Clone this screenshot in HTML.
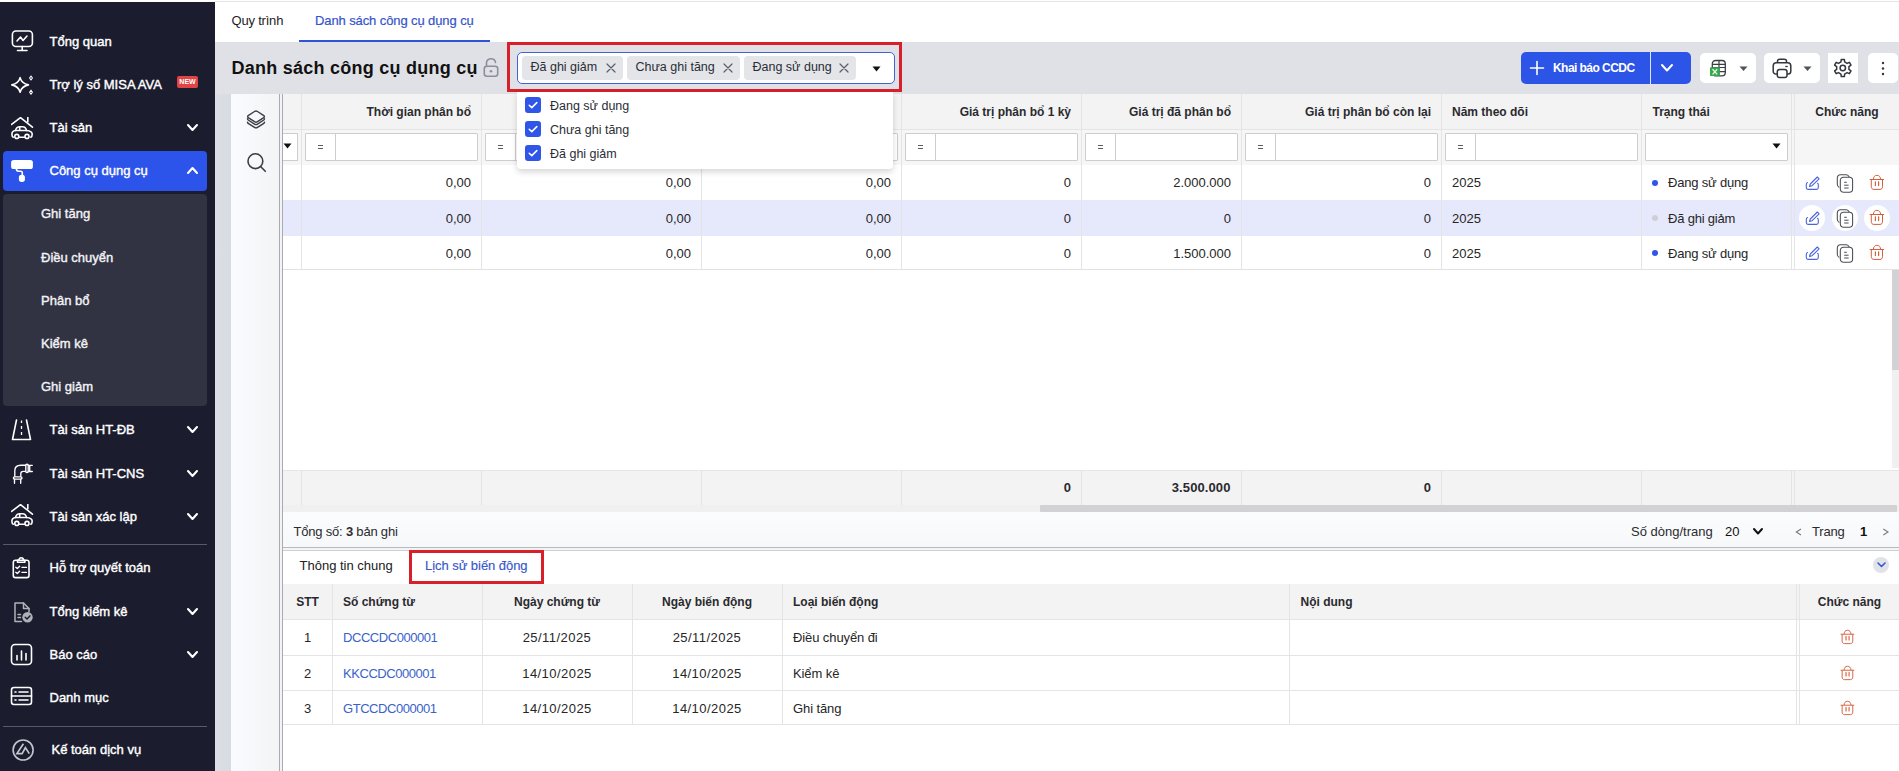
<!DOCTYPE html><html><head><meta charset="utf-8"><style>
html,body{margin:0;padding:0;}
body{width:1899px;height:771px;overflow:hidden;position:relative;background:#dfe1e6;font-family:"Liberation Sans",sans-serif;}
.t{position:absolute;white-space:nowrap;font-family:"Liberation Sans",sans-serif;}
.sb{-webkit-text-stroke:0.25px currentColor;}
</style></head><body>
<div style="position:absolute;left:0px;top:0px;width:1899px;height:2px;background:#ffffff"></div>
<div style="position:absolute;left:215px;top:1px;width:1684px;height:1px;background:#e4e4e6"></div>
<div style="position:absolute;left:0px;top:2px;width:215px;height:769px;background:#1b1c2e"></div>
<div style="position:absolute;left:3px;top:151px;width:204px;height:40px;background:#2c53ea;border-radius:4px"></div>
<div style="position:absolute;left:3px;top:194px;width:204px;height:212px;background:#313242;border-radius:4px"></div>
<div style="position:absolute;left:3px;top:544px;width:204px;height:1px;background:#585a68"></div>
<div style="position:absolute;left:3px;top:726px;width:204px;height:1px;background:#585a68"></div>
<div class="t" style="left:49.50px;top:35.00px;width:600px;font-size:13px;line-height:13px;font-weight:400;color:#ffffff;text-align:left;-webkit-text-stroke:0.4px #ffffff;">Tổng quan</div>
<div class="t" style="left:49.50px;top:78.00px;width:600px;font-size:13px;line-height:13px;font-weight:400;color:#ffffff;text-align:left;-webkit-text-stroke:0.4px #ffffff;">Trợ lý số MISA AVA</div>
<div class="t" style="left:49.50px;top:121.00px;width:600px;font-size:13px;line-height:13px;font-weight:400;color:#ffffff;text-align:left;-webkit-text-stroke:0.4px #ffffff;">Tài sản</div>
<div class="t" style="left:49.50px;top:164.00px;width:600px;font-size:13px;line-height:13px;font-weight:400;color:#ffffff;text-align:left;-webkit-text-stroke:0.4px #ffffff;">Công cụ dụng cụ</div>
<div class="t" style="left:41.00px;top:207.00px;width:600px;font-size:13px;line-height:13px;font-weight:400;color:#f2f2f5;text-align:left;-webkit-text-stroke:0.4px #f2f2f5;">Ghi tăng</div>
<div class="t" style="left:41.00px;top:250.50px;width:600px;font-size:13px;line-height:13px;font-weight:400;color:#f2f2f5;text-align:left;-webkit-text-stroke:0.4px #f2f2f5;">Điều chuyển</div>
<div class="t" style="left:41.00px;top:293.70px;width:600px;font-size:13px;line-height:13px;font-weight:400;color:#f2f2f5;text-align:left;-webkit-text-stroke:0.4px #f2f2f5;">Phân bổ</div>
<div class="t" style="left:41.00px;top:336.80px;width:600px;font-size:13px;line-height:13px;font-weight:400;color:#f2f2f5;text-align:left;-webkit-text-stroke:0.4px #f2f2f5;">Kiểm kê</div>
<div class="t" style="left:41.00px;top:379.80px;width:600px;font-size:13px;line-height:13px;font-weight:400;color:#f2f2f5;text-align:left;-webkit-text-stroke:0.4px #f2f2f5;">Ghi giảm</div>
<div class="t" style="left:49.50px;top:423.00px;width:600px;font-size:13px;line-height:13px;font-weight:400;color:#ffffff;text-align:left;-webkit-text-stroke:0.4px #ffffff;">Tài sản HT-ĐB</div>
<div class="t" style="left:49.50px;top:467.00px;width:600px;font-size:13px;line-height:13px;font-weight:400;color:#ffffff;text-align:left;-webkit-text-stroke:0.4px #ffffff;">Tài sản HT-CNS</div>
<div class="t" style="left:49.50px;top:510.00px;width:600px;font-size:13px;line-height:13px;font-weight:400;color:#ffffff;text-align:left;-webkit-text-stroke:0.4px #ffffff;">Tài sản xác lập</div>
<div class="t" style="left:49.50px;top:561.00px;width:600px;font-size:13px;line-height:13px;font-weight:400;color:#ffffff;text-align:left;-webkit-text-stroke:0.4px #ffffff;">Hỗ trợ quyết toán</div>
<div class="t" style="left:49.50px;top:605.00px;width:600px;font-size:13px;line-height:13px;font-weight:400;color:#ffffff;text-align:left;-webkit-text-stroke:0.4px #ffffff;">Tổng kiểm kê</div>
<div class="t" style="left:49.50px;top:648.00px;width:600px;font-size:13px;line-height:13px;font-weight:400;color:#ffffff;text-align:left;-webkit-text-stroke:0.4px #ffffff;">Báo cáo</div>
<div class="t" style="left:49.50px;top:691.00px;width:600px;font-size:13px;line-height:13px;font-weight:400;color:#ffffff;text-align:left;-webkit-text-stroke:0.4px #ffffff;">Danh mục</div>
<div class="t" style="left:51.50px;top:743.00px;width:600px;font-size:13px;line-height:13px;font-weight:400;color:#ffffff;text-align:left;-webkit-text-stroke:0.4px #ffffff;">Kế toán dịch vụ</div>
<div style="position:absolute;left:177px;top:76px;width:21px;height:12px;background:#e04444;border-radius:2px;color:#fff;font-size:7px;line-height:12px;font-weight:700;text-align:center;font-family:'Liberation Sans',sans-serif;">NEW</div>
<svg style="position:absolute;left:186.1px;top:122.9px;" width="13" height="9" viewBox="0 0 13 9" fill="none"><path d="M2 2 L6.5 7 L11 2" stroke="#ffffff" stroke-width="2.1" stroke-linecap="round" stroke-linejoin="round"/></svg>
<svg style="position:absolute;left:186.1px;top:424.9px;" width="13" height="9" viewBox="0 0 13 9" fill="none"><path d="M2 2 L6.5 7 L11 2" stroke="#ffffff" stroke-width="2.1" stroke-linecap="round" stroke-linejoin="round"/></svg>
<svg style="position:absolute;left:186.1px;top:468.9px;" width="13" height="9" viewBox="0 0 13 9" fill="none"><path d="M2 2 L6.5 7 L11 2" stroke="#ffffff" stroke-width="2.1" stroke-linecap="round" stroke-linejoin="round"/></svg>
<svg style="position:absolute;left:186.1px;top:511.9px;" width="13" height="9" viewBox="0 0 13 9" fill="none"><path d="M2 2 L6.5 7 L11 2" stroke="#ffffff" stroke-width="2.1" stroke-linecap="round" stroke-linejoin="round"/></svg>
<svg style="position:absolute;left:186.1px;top:606.9px;" width="13" height="9" viewBox="0 0 13 9" fill="none"><path d="M2 2 L6.5 7 L11 2" stroke="#ffffff" stroke-width="2.1" stroke-linecap="round" stroke-linejoin="round"/></svg>
<svg style="position:absolute;left:186.1px;top:649.9px;" width="13" height="9" viewBox="0 0 13 9" fill="none"><path d="M2 2 L6.5 7 L11 2" stroke="#ffffff" stroke-width="2.1" stroke-linecap="round" stroke-linejoin="round"/></svg>
<svg style="position:absolute;left:186.1px;top:165.7px;" width="13" height="9" viewBox="0 0 13 9" fill="none"><path d="M2 7 L6.5 2 L11 7" stroke="#ffffff" stroke-width="2.1" stroke-linecap="round" stroke-linejoin="round"/></svg>
<svg style="position:absolute;left:10px;top:29px;" width="25" height="24" viewBox="0 0 25 24" fill="none"><rect x="2.4" y="2" width="20" height="15.5" rx="3.5" stroke="#ffffff" stroke-width="1.6" stroke-linecap="round" stroke-linejoin="round"/><path d="M12.2 17.5 V21.5 M7.5 21.5 H17" stroke="#ffffff" stroke-width="1.6" stroke-linecap="round" stroke-linejoin="round"/><path d="M7 12 L10.5 8 L13 11.5 L17 7" stroke="#ffffff" stroke-width="1.6" stroke-linecap="round" stroke-linejoin="round"/></svg>
<svg style="position:absolute;left:10px;top:74px;" width="25" height="22" viewBox="0 0 25 22" fill="none"><path d="M10.1 3.6 Q11.6 9.4 18.4 10.9 Q11.6 12.4 10.1 18.2 Q8.6 12.4 1.8 10.9 Q8.6 9.4 10.1 3.6 Z" stroke="#ffffff" stroke-width="1.6" stroke-linecap="round" stroke-linejoin="round"/><path d="M21 2 L22.4 4 L21 6 L19.6 4 Z" stroke="#fff" stroke-width="1.1" stroke-linejoin="round"/><path d="M21 16.2 L22.4 18.2 L21 20.2 L19.6 18.2 Z" stroke="#fff" stroke-width="1.1" stroke-linejoin="round"/></svg>
<svg style="position:absolute;left:11px;top:117px;" width="23" height="23" viewBox="0 0 23 23" fill="none"><path d="M0.6 7.4 L9.5 0.6 L21.4 10.2" stroke="#ffffff" stroke-width="1.6" stroke-linecap="round" stroke-linejoin="round"/><path d="M16.8 0.6 V5" stroke="#ffffff" stroke-width="1.6" stroke-linecap="round" stroke-linejoin="round"/><path d="M2.3 20.2 C1.3 19.7 0.9 18.6 0.9 17.2 C0.9 15 2.2 13.8 4.4 13.5 C5.1 11.1 6.5 9.7 8.8 9.7 H11.6 C13.6 9.7 14.9 10.9 15.6 13.5 C19.2 13.8 21.2 15 21.2 17.2 C21.2 18.6 20.8 19.7 19.8 20.2 M8.2 20.3 H13.6" stroke="#ffffff" stroke-width="1.6" stroke-linecap="round" stroke-linejoin="round"/><path d="M4.4 13.5 H15.6 M8.7 9.9 V13.3" stroke="#ffffff" stroke-width="1.6" stroke-linecap="round" stroke-linejoin="round"/><circle cx="5.8" cy="19.4" r="2" fill="#1b1c2e" stroke="#ffffff" stroke-width="1.6" stroke-linecap="round" stroke-linejoin="round"/><circle cx="16" cy="19.4" r="2" fill="#1b1c2e" stroke="#ffffff" stroke-width="1.6" stroke-linecap="round" stroke-linejoin="round"/></svg>
<svg style="position:absolute;left:11px;top:504px;" width="23" height="23" viewBox="0 0 23 23" fill="none"><path d="M0.6 7.4 L9.5 0.6 L21.4 10.2" stroke="#ffffff" stroke-width="1.6" stroke-linecap="round" stroke-linejoin="round"/><path d="M16.8 0.6 V5" stroke="#ffffff" stroke-width="1.6" stroke-linecap="round" stroke-linejoin="round"/><path d="M2.3 20.2 C1.3 19.7 0.9 18.6 0.9 17.2 C0.9 15 2.2 13.8 4.4 13.5 C5.1 11.1 6.5 9.7 8.8 9.7 H11.6 C13.6 9.7 14.9 10.9 15.6 13.5 C19.2 13.8 21.2 15 21.2 17.2 C21.2 18.6 20.8 19.7 19.8 20.2 M8.2 20.3 H13.6" stroke="#ffffff" stroke-width="1.6" stroke-linecap="round" stroke-linejoin="round"/><path d="M4.4 13.5 H15.6 M8.7 9.9 V13.3" stroke="#ffffff" stroke-width="1.6" stroke-linecap="round" stroke-linejoin="round"/><circle cx="5.8" cy="19.4" r="2" fill="#1b1c2e" stroke="#ffffff" stroke-width="1.6" stroke-linecap="round" stroke-linejoin="round"/><circle cx="16" cy="19.4" r="2" fill="#1b1c2e" stroke="#ffffff" stroke-width="1.6" stroke-linecap="round" stroke-linejoin="round"/></svg>
<svg style="position:absolute;left:10px;top:159px;" width="24" height="24" viewBox="0 0 24 24" fill="none"><rect x="1.1" y="1.1" width="21.8" height="8.9" rx="2.6" fill="#fff"/><path d="M6.3 9.5 C6.3 11.5 7 12.3 8.8 12.3 H10.8 C11.8 12.3 12.3 12.9 12.3 13.8 V16.5" stroke="#fff" stroke-width="1.6" fill="none"/><rect x="8.9" y="15.7" width="6" height="7.2" rx="2.6" fill="#fff"/></svg>
<svg style="position:absolute;left:10px;top:418px;" width="24" height="24" viewBox="0 0 24 24" fill="none"><path d="M6.5 2 L2.5 21.5 H20.5 L16.5 2" stroke="#ffffff" stroke-width="1.6" stroke-linecap="round" stroke-linejoin="round"/><path d="M11.5 2.5 V5 M11.5 8 V11 M11.5 14 V17" stroke="#fff" stroke-width="1.3"/></svg>
<svg style="position:absolute;left:10px;top:461px;" width="24" height="24" viewBox="0 0 24 24" fill="none"><path d="M4.8 15.3 V9.8 C4.8 6.5 7 4.2 10.8 4.2 H15.6 M10.8 15.3 V12.8 C10.8 11.3 11.6 10.4 13.2 10.4 H15.6" stroke="#ffffff" stroke-width="1.35" stroke-linecap="round" stroke-linejoin="round" fill="none"/><rect x="15.8" y="3.2" width="2.4" height="8.4" rx="1.1" stroke="#ffffff" stroke-width="1.35" stroke-linecap="round" stroke-linejoin="round" fill="none"/><path d="M18.2 4.3 H22.3 M18.2 10.5 H22.3 M19.7 4.3 V10.5" stroke="#ffffff" stroke-width="1.35" stroke-linecap="round" stroke-linejoin="round" fill="none"/><rect x="3.4" y="15.8" width="8.6" height="2.3" rx="1.1" stroke="#ffffff" stroke-width="1.35" stroke-linecap="round" stroke-linejoin="round" fill="none"/><path d="M4.5 18.1 V22.2 M10.7 18.1 V22.2" stroke="#ffffff" stroke-width="1.35" stroke-linecap="round" stroke-linejoin="round" fill="none"/></svg>
<svg style="position:absolute;left:10px;top:556px;" width="24" height="26" viewBox="0 0 24 26" fill="none"><rect x="3.3" y="4.3" width="15.7" height="17.3" rx="2.2" stroke="#ffffff" stroke-width="1.6" stroke-linecap="round" stroke-linejoin="round"/><path d="M7.5 6.3 V4.3 H9 C9 2.8 9.8 1.8 11.2 1.8 C12.6 1.8 13.4 2.8 13.4 4.3 H14.9 V6.3 Z" stroke="#ffffff" stroke-width="1.6" stroke-linecap="round" stroke-linejoin="round"/><path d="M5.8 11.2 L7.3 12.6 L9.6 10.2 M12 11.4 H16.4 M5.8 16.2 L7.3 17.6 L9.6 15.2 M12 16.4 H16.4" stroke="#fff" stroke-width="1.4" stroke-linecap="round" stroke-linejoin="round"/></svg>
<svg style="position:absolute;left:10.5px;top:600.5px;" width="25" height="25" viewBox="0 0 25 25" fill="none"><path d="M12.5 2 H4 V20.5 H10.5 M12.5 2 L18 7.5 V11" stroke="#b0b1b8" stroke-width="1.5" stroke-linecap="round" stroke-linejoin="round"/><path d="M12.5 2 V7.5 H18" stroke="#b0b1b8" stroke-width="1.5" stroke-linecap="round" stroke-linejoin="round"/><path d="M7 13.5 H9.5 M7 16.5 H9.5" stroke="#b0b1b8" stroke-width="1.5" stroke-linecap="round" stroke-linejoin="round"/><circle cx="16.5" cy="16.3" r="5.2" fill="#b0b1b8"/><path d="M14.2 16.3 L16 18 L18.9 14.9" stroke="#1b1c2e" stroke-width="1.5" fill="none" stroke-linecap="round" stroke-linejoin="round"/></svg>
<svg style="position:absolute;left:10px;top:643px;" width="24" height="24" viewBox="0 0 24 24" fill="none"><rect x="1.5" y="1.5" width="20" height="20" rx="3.5" stroke="#ffffff" stroke-width="1.6" stroke-linecap="round" stroke-linejoin="round"/><path d="M7 12.5 V17 M11.5 8 V17 M16 10.5 V17" stroke="#ffffff" stroke-width="1.6" stroke-linecap="round" stroke-linejoin="round"/></svg>
<svg style="position:absolute;left:10px;top:686px;" width="24" height="22" viewBox="0 0 24 22" fill="none"><rect x="1.5" y="1.5" width="20" height="17" rx="2.5" stroke="#ffffff" stroke-width="1.6" stroke-linecap="round" stroke-linejoin="round"/><path d="M1.5 10 H21.5 M5 6 H6 M9 6 H18 M5 14 H6 M9 14 H18" stroke="#ffffff" stroke-width="1.6" stroke-linecap="round" stroke-linejoin="round"/></svg>
<svg style="position:absolute;left:11px;top:739px;" width="24" height="24" viewBox="0 0 24 24" fill="none"><circle cx="12.1" cy="11" r="10" stroke="#c4c5cd" stroke-width="1.6" fill="none"/><path d="M12.4 4.8 L5.9 14.6 H11.1 L14.4 8.6 L18.3 14.6" stroke="#c4c5cd" stroke-width="1.7" fill="none" stroke-linejoin="miter"/></svg>
<div style="position:absolute;left:215px;top:2px;width:1684px;height:40px;background:#ffffff"></div>
<div class="t" style="left:231.50px;top:14.00px;width:600px;font-size:13px;line-height:13px;font-weight:400;color:#1d1d1f;text-align:left;letter-spacing:-0.2px;">Quy trình</div>
<div class="t" style="left:315.00px;top:14.00px;width:600px;font-size:13px;line-height:13px;font-weight:400;color:#3654c9;text-align:left;letter-spacing:-0.1px;-webkit-text-stroke:0.2px #3654c9;">Danh sách công cụ dụng cụ</div>
<div style="position:absolute;left:299px;top:40px;width:191px;height:2px;background:#2f54d9"></div>
<div class="t" style="left:231.50px;top:59.26px;width:600px;font-size:18px;line-height:18px;font-weight:700;color:#111111;text-align:left;letter-spacing:0.25px;">Danh sách công cụ dụng cụ</div>
<svg style="position:absolute;left:482px;top:57px;" width="18" height="21" viewBox="0 0 18 21" fill="none"><path d="M4.5 9.5 V6 C4.5 3.5 6.5 1.8 9 1.8 C11.5 1.8 13.2 3.3 13.5 5.5" stroke="#8d909c" stroke-width="1.6" fill="none" stroke-linecap="round"/><rect x="2.3" y="9.3" width="13.4" height="10" rx="2.5" stroke="#8d909c" stroke-width="1.6" fill="none"/><circle cx="9" cy="14.2" r="1.3" fill="#8d909c"/></svg>
<div style="position:absolute;left:507px;top:42px;width:389px;height:44px;border:3px solid #d7202a;"></div>
<div style="position:absolute;left:517px;top:52px;width:376px;height:30px;background:#fff;border:1px solid #4263d6;border-radius:5px;"></div>
<div style="position:absolute;left:522px;top:56px;width:101px;height:24px;background:#e3e5e9;border-radius:4px;"></div>
<div class="t" style="left:530.50px;top:61.12px;width:600px;font-size:12.5px;line-height:12.5px;font-weight:400;color:#2a2d35;text-align:left;">Đã ghi giảm</div>
<svg style="position:absolute;left:606px;top:63px;" width="10" height="10" viewBox="0 0 10 10" fill="none"><path d="M1 1 L9 9 M9 1 L1 9" stroke="#5a5e66" stroke-width="1.2" stroke-linecap="round"/></svg>
<div style="position:absolute;left:627px;top:56px;width:113px;height:24px;background:#e3e5e9;border-radius:4px;"></div>
<div class="t" style="left:635.50px;top:61.12px;width:600px;font-size:12.5px;line-height:12.5px;font-weight:400;color:#2a2d35;text-align:left;">Chưa ghi tăng</div>
<svg style="position:absolute;left:723px;top:63px;" width="10" height="10" viewBox="0 0 10 10" fill="none"><path d="M1 1 L9 9 M9 1 L1 9" stroke="#5a5e66" stroke-width="1.2" stroke-linecap="round"/></svg>
<div style="position:absolute;left:744px;top:56px;width:112px;height:24px;background:#e3e5e9;border-radius:4px;"></div>
<div class="t" style="left:752.50px;top:61.12px;width:600px;font-size:12.5px;line-height:12.5px;font-weight:400;color:#2a2d35;text-align:left;">Đang sử dụng</div>
<svg style="position:absolute;left:839px;top:63px;" width="10" height="10" viewBox="0 0 10 10" fill="none"><path d="M1 1 L9 9 M9 1 L1 9" stroke="#5a5e66" stroke-width="1.2" stroke-linecap="round"/></svg>
<svg style="position:absolute;left:872px;top:66px;" width="9" height="6" viewBox="0 0 9 6" fill="none"><path d="M0.5 0.5 H8.5 L4.5 5.5 Z" fill="#111"/></svg>
<div style="position:absolute;left:1521px;top:52px;width:170px;height:32px;background:#2c54e6;border-radius:5px;"></div>
<div style="position:absolute;left:1650px;top:52px;width:1px;height:32px;background:#dfe6ff;"></div>
<svg style="position:absolute;left:1529px;top:60px;" width="16" height="16" viewBox="0 0 16 16" fill="none"><path d="M8 1.5 V14.5 M1.5 8 H14.5" stroke="#fff" stroke-width="1.6" stroke-linecap="round"/></svg>
<div class="t" style="left:1553.00px;top:61.64px;width:600px;font-size:12px;line-height:12px;font-weight:700;color:#ffffff;text-align:left;letter-spacing:-0.55px;">Khai báo CCDC</div>
<svg style="position:absolute;left:1659.5px;top:62.75px;" width="14" height="9.5" viewBox="0 0 14 9.5" fill="none"><path d="M2 2 L7.0 7.5 L12 2" stroke="#fff" stroke-width="2" stroke-linecap="round" stroke-linejoin="round"/></svg>
<div style="position:absolute;left:1700px;top:53px;width:56px;height:30px;background:#fff;border-radius:5px;"></div>
<div style="position:absolute;left:1764px;top:53px;width:56px;height:30px;background:#fff;border-radius:5px;"></div>
<div style="position:absolute;left:1828px;top:53px;width:30px;height:30px;background:#fff;"></div>
<div style="position:absolute;left:1868px;top:53px;width:30px;height:30px;background:#fff;border-radius:5px;"></div>
<svg style="position:absolute;left:1708px;top:58px;" width="20" height="20" viewBox="0 0 20 20" fill="none"><rect x="4.3" y="2.5" width="13" height="15.3" rx="3.3" stroke="#3a3d45" stroke-width="1.3" fill="none"/><path d="M11 2.5 V17.8 M4.3 6.4 H17.3 M4.3 9.5 H17.3 M4.3 13.7 H17.3" stroke="#3a3d45" stroke-width="1.2"/><rect x="2" y="9.3" width="9.8" height="8.7" rx="0.8" fill="#3aa74a"/><path d="M4.6 11.2 L9.2 16.4 M9.2 11.2 L4.6 16.4" stroke="#e9fbe9" stroke-width="1.3"/></svg>
<svg style="position:absolute;left:1739px;top:66px;" width="9" height="6" viewBox="0 0 9 6" fill="none"><path d="M0.5 0.5 H8.5 L4.5 5 Z" fill="#4d525d"/></svg>
<svg style="position:absolute;left:1771px;top:57px;" width="22" height="22" viewBox="0 0 22 22" fill="none"><path d="M6.5 5.8 V4.3 C6.5 2.9 7.3 2.2 8.7 2.2 H13.3 C14.7 2.2 15.5 2.9 15.5 4.3 V5.8" stroke="#33363d" stroke-width="1.5" fill="none"/><path d="M6 17 H5 C3.3 17 2.2 15.9 2.2 14.2 V9 C2.2 7 3.3 5.8 5.3 5.8 H16.7 C18.7 5.8 19.8 7 19.8 9 V14.2 C19.8 15.9 18.7 17 17 17 H16" stroke="#33363d" stroke-width="1.5" fill="none"/><rect x="6.3" y="12.5" width="9.7" height="8" rx="2.3" stroke="#33363d" stroke-width="1.5" fill="#fff"/><path d="M14.3 9.5 H16.7" stroke="#33363d" stroke-width="1.3"/></svg>
<svg style="position:absolute;left:1803px;top:66px;" width="9" height="6" viewBox="0 0 9 6" fill="none"><path d="M0.5 0.5 H8.5 L4.5 5 Z" fill="#4d525d"/></svg>
<svg style="position:absolute;left:1833px;top:58px;" width="20" height="20" viewBox="0 0 20 20" fill="none"><path d="M7.98 3.97 L8.23 1.44 L11.37 1.44 L11.62 3.97 L14.11 5.41 L16.42 4.36 L18.00 7.08 L15.93 8.56 L15.93 11.44 L18.00 12.92 L16.42 15.64 L14.11 14.59 L11.62 16.03 L11.37 18.56 L8.23 18.56 L7.98 16.03 L5.49 14.59 L3.18 15.64 L1.60 12.92 L3.67 11.44 L3.67 8.56 L1.60 7.08 L3.18 4.36 L5.49 5.41 Z" stroke="#33363d" stroke-width="1.5" fill="none" stroke-linejoin="round"/><circle cx="9.8" cy="10" r="2.7" stroke="#33363d" stroke-width="1.5" fill="none"/></svg>
<svg style="position:absolute;left:1880px;top:61px;" width="6" height="15" viewBox="0 0 6 15" fill="none"><circle cx="3" cy="2" r="1.2" fill="#33363d"/><circle cx="3" cy="7.5" r="1.2" fill="#33363d"/><circle cx="3" cy="13" r="1.2" fill="#33363d"/></svg>
<div style="position:absolute;left:215px;top:94px;width:16px;height:677px;background:linear-gradient(90deg,#dcdfe5,#d7dbe2);"></div>
<div style="position:absolute;left:231px;top:94px;width:48px;height:677px;background:linear-gradient(90deg,#f9fbfe,#f2f4f6);"></div>
<svg style="position:absolute;left:244px;top:107px;" width="24" height="26" viewBox="0 0 24 26" fill="none"><path d="M12 4 C12.6 4 13 4.2 13.5 4.5 L19.8 8.6 C20.6 9.1 20.6 10.1 19.8 10.6 L13.5 14.7 C13 15 12.6 15.2 12 15.2 C11.4 15.2 11 15 10.5 14.7 L4.2 10.6 C3.4 10.1 3.4 9.1 4.2 8.6 L10.5 4.5 C11 4.2 11.4 4 12 4 Z" stroke="#3a3d45" stroke-width="1.4" fill="none"/><path d="M3.6 11.3 C3.4 12 3.6 12.6 4.2 13 L10.5 17.1 C11.4 17.7 12.6 17.7 13.5 17.1 L19.8 13 C20.4 12.6 20.6 12 20.4 11.3 M3.6 14.6 C3.4 15.3 3.6 15.9 4.2 16.3 L10.5 20.4 C11.4 21 12.6 21 13.5 20.4 L19.8 16.3 C20.4 15.9 20.6 15.3 20.4 14.6" stroke="#3a3d45" stroke-width="1.4" fill="none"/></svg>
<svg style="position:absolute;left:244px;top:150px;" width="24" height="24" viewBox="0 0 24 24" fill="none"><circle cx="11.4" cy="11.2" r="7.4" stroke="#3a3d45" stroke-width="1.6" fill="none"/><path d="M16.8 16.8 L21.3 21.3" stroke="#3a3d45" stroke-width="1.6" stroke-linecap="round"/></svg>
<div style="position:absolute;left:279px;top:94px;width:1px;height:677px;background:#a9abb0"></div>
<div style="position:absolute;left:280px;top:94px;width:2px;height:677px;background:#f3f3f5"></div>
<div style="position:absolute;left:282px;top:94px;width:1px;height:677px;background:#a9abb0"></div>
<div style="position:absolute;left:283px;top:94px;width:1616px;height:453px;background:#ffffff"></div>
<div style="position:absolute;left:283px;top:94px;width:1616px;height:35px;background:#f3f3f3"></div>
<div style="position:absolute;left:283px;top:129px;width:1616px;height:1px;background:#e4e4e4"></div>
<div style="position:absolute;left:283px;top:130px;width:1616px;height:35px;background:#f6f6f6"></div>
<div style="position:absolute;left:283px;top:200px;width:1616px;height:36px;background:#e6e9fb"></div>
<div style="position:absolute;left:283px;top:269px;width:1616px;height:1px;background:#e2e2e2"></div>
<div style="position:absolute;left:301px;top:94px;width:1px;height:176px;background:#e4e4e4"></div>
<div style="position:absolute;left:481px;top:94px;width:1px;height:176px;background:#e4e4e4"></div>
<div style="position:absolute;left:701px;top:94px;width:1px;height:176px;background:#e4e4e4"></div>
<div style="position:absolute;left:901px;top:94px;width:1px;height:176px;background:#e4e4e4"></div>
<div style="position:absolute;left:1081px;top:94px;width:1px;height:176px;background:#e4e4e4"></div>
<div style="position:absolute;left:1241px;top:94px;width:1px;height:176px;background:#e4e4e4"></div>
<div style="position:absolute;left:1441px;top:94px;width:1px;height:176px;background:#e4e4e4"></div>
<div style="position:absolute;left:1641px;top:94px;width:1px;height:176px;background:#e4e4e4"></div>
<div style="position:absolute;left:1791px;top:94px;width:1px;height:176px;background:#e4e4e4"></div>
<div style="position:absolute;left:1794px;top:94px;width:1px;height:176px;background:#e4e4e4"></div>
<div class="t" style="left:-129.00px;top:105.84px;width:600px;font-size:12px;line-height:12px;font-weight:700;color:#2a2a2e;text-align:right;">Thời gian phân bổ</div>
<div class="t" style="left:471.00px;top:105.84px;width:600px;font-size:12px;line-height:12px;font-weight:700;color:#2a2a2e;text-align:right;">Giá trị phân bổ 1 kỳ</div>
<div class="t" style="left:631.00px;top:105.84px;width:600px;font-size:12px;line-height:12px;font-weight:700;color:#2a2a2e;text-align:right;">Giá trị đã phân bổ</div>
<div class="t" style="left:831.00px;top:105.84px;width:600px;font-size:12px;line-height:12px;font-weight:700;color:#2a2a2e;text-align:right;">Giá trị phân bổ còn lại</div>
<div class="t" style="left:1452.00px;top:105.84px;width:600px;font-size:12px;line-height:12px;font-weight:700;color:#2a2a2e;text-align:left;">Năm theo dõi</div>
<div class="t" style="left:1652.50px;top:105.84px;width:600px;font-size:12px;line-height:12px;font-weight:700;color:#2a2a2e;text-align:left;">Trạng thái</div>
<div class="t" style="left:1547.00px;top:105.84px;width:600px;font-size:12px;line-height:12px;font-weight:700;color:#2a2a2e;text-align:center;">Chức năng</div>
<div style="position:absolute;left:283px;top:133px;width:15px;height:28px;background:#fff;border:1px solid #cdcdcd;border-left:none;box-sizing:border-box;"></div>
<svg style="position:absolute;left:283px;top:143px;" width="9" height="6" viewBox="0 0 9 6" fill="none"><path d="M0.5 0.5 H8.5 L4.5 5.5 Z" fill="#111"/></svg>
<div style="position:absolute;left:305px;top:133px;width:173px;height:28px;background:#fff;border:1px solid #cdcdcd;border-radius:1px;box-sizing:border-box;"></div>
<div style="position:absolute;left:335px;top:134px;width:1px;height:26px;background:#cdcdcd"></div>
<div style="position:absolute;left:318px;top:145px;width:5px;height:1.2px;background:#5c5c5c"></div>
<div style="position:absolute;left:318px;top:148px;width:5px;height:1.2px;background:#5c5c5c"></div>
<div style="position:absolute;left:485px;top:133px;width:213px;height:28px;background:#fff;border:1px solid #cdcdcd;border-radius:1px;box-sizing:border-box;"></div>
<div style="position:absolute;left:515px;top:134px;width:1px;height:26px;background:#cdcdcd"></div>
<div style="position:absolute;left:498px;top:145px;width:5px;height:1.2px;background:#5c5c5c"></div>
<div style="position:absolute;left:498px;top:148px;width:5px;height:1.2px;background:#5c5c5c"></div>
<div style="position:absolute;left:705px;top:133px;width:193px;height:28px;background:#fff;border:1px solid #cdcdcd;border-radius:1px;box-sizing:border-box;"></div>
<div style="position:absolute;left:735px;top:134px;width:1px;height:26px;background:#cdcdcd"></div>
<div style="position:absolute;left:718px;top:145px;width:5px;height:1.2px;background:#5c5c5c"></div>
<div style="position:absolute;left:718px;top:148px;width:5px;height:1.2px;background:#5c5c5c"></div>
<div style="position:absolute;left:905px;top:133px;width:173px;height:28px;background:#fff;border:1px solid #cdcdcd;border-radius:1px;box-sizing:border-box;"></div>
<div style="position:absolute;left:935px;top:134px;width:1px;height:26px;background:#cdcdcd"></div>
<div style="position:absolute;left:918px;top:145px;width:5px;height:1.2px;background:#5c5c5c"></div>
<div style="position:absolute;left:918px;top:148px;width:5px;height:1.2px;background:#5c5c5c"></div>
<div style="position:absolute;left:1085px;top:133px;width:153px;height:28px;background:#fff;border:1px solid #cdcdcd;border-radius:1px;box-sizing:border-box;"></div>
<div style="position:absolute;left:1115px;top:134px;width:1px;height:26px;background:#cdcdcd"></div>
<div style="position:absolute;left:1098px;top:145px;width:5px;height:1.2px;background:#5c5c5c"></div>
<div style="position:absolute;left:1098px;top:148px;width:5px;height:1.2px;background:#5c5c5c"></div>
<div style="position:absolute;left:1245px;top:133px;width:193px;height:28px;background:#fff;border:1px solid #cdcdcd;border-radius:1px;box-sizing:border-box;"></div>
<div style="position:absolute;left:1275px;top:134px;width:1px;height:26px;background:#cdcdcd"></div>
<div style="position:absolute;left:1258px;top:145px;width:5px;height:1.2px;background:#5c5c5c"></div>
<div style="position:absolute;left:1258px;top:148px;width:5px;height:1.2px;background:#5c5c5c"></div>
<div style="position:absolute;left:1445px;top:133px;width:193px;height:28px;background:#fff;border:1px solid #cdcdcd;border-radius:1px;box-sizing:border-box;"></div>
<div style="position:absolute;left:1475px;top:134px;width:1px;height:26px;background:#cdcdcd"></div>
<div style="position:absolute;left:1458px;top:145px;width:5px;height:1.2px;background:#5c5c5c"></div>
<div style="position:absolute;left:1458px;top:148px;width:5px;height:1.2px;background:#5c5c5c"></div>
<div style="position:absolute;left:1645px;top:133px;width:143px;height:28px;background:#fff;border:1px solid #cdcdcd;border-radius:1px;box-sizing:border-box;"></div>
<svg style="position:absolute;left:1772px;top:143px;" width="9" height="6" viewBox="0 0 9 6" fill="none"><path d="M0.5 0.5 H8.5 L4.5 5.5 Z" fill="#111"/></svg>
<div style="position:absolute;left:1791px;top:130px;width:108px;height:35px;background:#f6f6f6"></div>
<div style="position:absolute;left:1791px;top:94px;width:1px;height:176px;background:#e4e4e4"></div>
<div style="position:absolute;left:1794px;top:94px;width:1px;height:176px;background:#e4e4e4"></div>
<div class="t" style="left:-129.00px;top:176.30px;width:600px;font-size:13px;line-height:13px;font-weight:400;color:#262626;text-align:right;">0,00</div>
<div class="t" style="left:91.00px;top:176.30px;width:600px;font-size:13px;line-height:13px;font-weight:400;color:#262626;text-align:right;">0,00</div>
<div class="t" style="left:291.00px;top:176.30px;width:600px;font-size:13px;line-height:13px;font-weight:400;color:#262626;text-align:right;">0,00</div>
<div class="t" style="left:471.00px;top:176.30px;width:600px;font-size:13px;line-height:13px;font-weight:400;color:#262626;text-align:right;">0</div>
<div class="t" style="left:631.00px;top:176.30px;width:600px;font-size:13px;line-height:13px;font-weight:400;color:#262626;text-align:right;">2.000.000</div>
<div class="t" style="left:831.00px;top:176.30px;width:600px;font-size:13px;line-height:13px;font-weight:400;color:#262626;text-align:right;">0</div>
<div class="t" style="left:1452.00px;top:176.30px;width:600px;font-size:13px;line-height:13px;font-weight:400;color:#262626;text-align:left;">2025</div>
<div style="position:absolute;left:1652px;top:179.8px;width:6px;height:6px;border-radius:3px;background:#2f56e8"></div>
<div class="t" style="left:1668.00px;top:176.30px;width:600px;font-size:13px;line-height:13px;font-weight:400;color:#262626;text-align:left;letter-spacing:-0.2px;">Đang sử dụng</div>
<svg style="position:absolute;left:1804px;top:173.8px;" width="18" height="18" viewBox="0 0 18 18" fill="none"><path d="M3.5 8.5 C2.8 8.8 2.3 9.5 2.3 10.5 V13.5 C2.3 14.6 3 15.4 4 15.4 H12.5 C13.6 15.4 14.3 14.6 14.3 13.5 V10.5 C14.3 9.8 14 9.4 13.5 9.2" stroke="#4a66d8" stroke-width="1.1" fill="none" stroke-linecap="round"/><path d="M5.5 12.4 L6.3 10 L13.3 3 L15.1 4.8 L8.1 11.7 Z" stroke="#4a66d8" stroke-width="1.1" fill="none" stroke-linejoin="round"/></svg>
<svg style="position:absolute;left:1836px;top:173.8px;" width="18" height="20" viewBox="0 0 18 20" fill="none"><path d="M3.3 13.5 C2 12.8 1.3 11.8 1.3 10.2 V4 C1.3 1.9 2.5 0.7 4.5 0.7 H10.5 C11.6 0.7 12.5 1.5 13.3 3" stroke="#4a4c52" stroke-width="1.05" fill="none"/><rect x="4.3" y="3.2" width="12.3" height="15.1" rx="3.2" fill="none" stroke="#4a4c52" stroke-width="1.05"/><path d="M8.2 8.3 H10.8 M8.2 11.2 H12.6 M8.2 14 H12.6" stroke="#4a4c52" stroke-width="1"/></svg>
<svg style="position:absolute;left:1868px;top:173.8px;" width="18" height="18" viewBox="0 0 18 18" fill="none"><path d="M2.1 5.5 H15.6" stroke="#d35f3d" stroke-width="1" stroke-linecap="round"/><path d="M5.4 5.5 C5.4 3 6.7 1.3 8.9 1.3 C11.1 1.3 12.6 3 12.6 5.5" stroke="#d35f3d" stroke-width="1" fill="none"/><path d="M3.3 5.5 V12.8 C3.3 14.3 4.3 15.4 5.8 15.4 H12 C13.5 15.4 14.5 14.3 14.5 12.8 V5.5" stroke="#d35f3d" stroke-width="1" fill="none"/><path d="M7.4 7.8 V11.6 M10.6 7.8 V11.6" stroke="#d9603c" stroke-width="1.2" stroke-linecap="round"/></svg>
<div class="t" style="left:-129.00px;top:211.50px;width:600px;font-size:13px;line-height:13px;font-weight:400;color:#262626;text-align:right;">0,00</div>
<div class="t" style="left:91.00px;top:211.50px;width:600px;font-size:13px;line-height:13px;font-weight:400;color:#262626;text-align:right;">0,00</div>
<div class="t" style="left:291.00px;top:211.50px;width:600px;font-size:13px;line-height:13px;font-weight:400;color:#262626;text-align:right;">0,00</div>
<div class="t" style="left:471.00px;top:211.50px;width:600px;font-size:13px;line-height:13px;font-weight:400;color:#262626;text-align:right;">0</div>
<div class="t" style="left:631.00px;top:211.50px;width:600px;font-size:13px;line-height:13px;font-weight:400;color:#262626;text-align:right;">0</div>
<div class="t" style="left:831.00px;top:211.50px;width:600px;font-size:13px;line-height:13px;font-weight:400;color:#262626;text-align:right;">0</div>
<div class="t" style="left:1452.00px;top:211.50px;width:600px;font-size:13px;line-height:13px;font-weight:400;color:#262626;text-align:left;">2025</div>
<div style="position:absolute;left:1652px;top:215.0px;width:6px;height:6px;border-radius:3px;background:#cfcfd4"></div>
<div class="t" style="left:1668.00px;top:211.50px;width:600px;font-size:13px;line-height:13px;font-weight:400;color:#262626;text-align:left;letter-spacing:-0.2px;">Đã ghi giảm</div>
<div style="position:absolute;left:1799px;top:205.0px;width:26px;height:26px;border-radius:13px;background:#ffffff"></div>
<div style="position:absolute;left:1831.5px;top:205.0px;width:26px;height:26px;border-radius:13px;background:#ffffff"></div>
<div style="position:absolute;left:1863.5px;top:205.0px;width:26px;height:26px;border-radius:13px;background:#ffffff"></div>
<svg style="position:absolute;left:1804px;top:209.0px;" width="18" height="18" viewBox="0 0 18 18" fill="none"><path d="M3.5 8.5 C2.8 8.8 2.3 9.5 2.3 10.5 V13.5 C2.3 14.6 3 15.4 4 15.4 H12.5 C13.6 15.4 14.3 14.6 14.3 13.5 V10.5 C14.3 9.8 14 9.4 13.5 9.2" stroke="#4a66d8" stroke-width="1.1" fill="none" stroke-linecap="round"/><path d="M5.5 12.4 L6.3 10 L13.3 3 L15.1 4.8 L8.1 11.7 Z" stroke="#4a66d8" stroke-width="1.1" fill="none" stroke-linejoin="round"/></svg>
<svg style="position:absolute;left:1836px;top:209.0px;" width="18" height="20" viewBox="0 0 18 20" fill="none"><path d="M3.3 13.5 C2 12.8 1.3 11.8 1.3 10.2 V4 C1.3 1.9 2.5 0.7 4.5 0.7 H10.5 C11.6 0.7 12.5 1.5 13.3 3" stroke="#4a4c52" stroke-width="1.05" fill="none"/><rect x="4.3" y="3.2" width="12.3" height="15.1" rx="3.2" fill="none" stroke="#4a4c52" stroke-width="1.05"/><path d="M8.2 8.3 H10.8 M8.2 11.2 H12.6 M8.2 14 H12.6" stroke="#4a4c52" stroke-width="1"/></svg>
<svg style="position:absolute;left:1868px;top:209.0px;" width="18" height="18" viewBox="0 0 18 18" fill="none"><path d="M2.1 5.5 H15.6" stroke="#d35f3d" stroke-width="1" stroke-linecap="round"/><path d="M5.4 5.5 C5.4 3 6.7 1.3 8.9 1.3 C11.1 1.3 12.6 3 12.6 5.5" stroke="#d35f3d" stroke-width="1" fill="none"/><path d="M3.3 5.5 V12.8 C3.3 14.3 4.3 15.4 5.8 15.4 H12 C13.5 15.4 14.5 14.3 14.5 12.8 V5.5" stroke="#d35f3d" stroke-width="1" fill="none"/><path d="M7.4 7.8 V11.6 M10.6 7.8 V11.6" stroke="#d9603c" stroke-width="1.2" stroke-linecap="round"/></svg>
<div class="t" style="left:-129.00px;top:246.70px;width:600px;font-size:13px;line-height:13px;font-weight:400;color:#262626;text-align:right;">0,00</div>
<div class="t" style="left:91.00px;top:246.70px;width:600px;font-size:13px;line-height:13px;font-weight:400;color:#262626;text-align:right;">0,00</div>
<div class="t" style="left:291.00px;top:246.70px;width:600px;font-size:13px;line-height:13px;font-weight:400;color:#262626;text-align:right;">0,00</div>
<div class="t" style="left:471.00px;top:246.70px;width:600px;font-size:13px;line-height:13px;font-weight:400;color:#262626;text-align:right;">0</div>
<div class="t" style="left:631.00px;top:246.70px;width:600px;font-size:13px;line-height:13px;font-weight:400;color:#262626;text-align:right;">1.500.000</div>
<div class="t" style="left:831.00px;top:246.70px;width:600px;font-size:13px;line-height:13px;font-weight:400;color:#262626;text-align:right;">0</div>
<div class="t" style="left:1452.00px;top:246.70px;width:600px;font-size:13px;line-height:13px;font-weight:400;color:#262626;text-align:left;">2025</div>
<div style="position:absolute;left:1652px;top:250.2px;width:6px;height:6px;border-radius:3px;background:#2f56e8"></div>
<div class="t" style="left:1668.00px;top:246.70px;width:600px;font-size:13px;line-height:13px;font-weight:400;color:#262626;text-align:left;letter-spacing:-0.2px;">Đang sử dụng</div>
<svg style="position:absolute;left:1804px;top:244.2px;" width="18" height="18" viewBox="0 0 18 18" fill="none"><path d="M3.5 8.5 C2.8 8.8 2.3 9.5 2.3 10.5 V13.5 C2.3 14.6 3 15.4 4 15.4 H12.5 C13.6 15.4 14.3 14.6 14.3 13.5 V10.5 C14.3 9.8 14 9.4 13.5 9.2" stroke="#4a66d8" stroke-width="1.1" fill="none" stroke-linecap="round"/><path d="M5.5 12.4 L6.3 10 L13.3 3 L15.1 4.8 L8.1 11.7 Z" stroke="#4a66d8" stroke-width="1.1" fill="none" stroke-linejoin="round"/></svg>
<svg style="position:absolute;left:1836px;top:244.2px;" width="18" height="20" viewBox="0 0 18 20" fill="none"><path d="M3.3 13.5 C2 12.8 1.3 11.8 1.3 10.2 V4 C1.3 1.9 2.5 0.7 4.5 0.7 H10.5 C11.6 0.7 12.5 1.5 13.3 3" stroke="#4a4c52" stroke-width="1.05" fill="none"/><rect x="4.3" y="3.2" width="12.3" height="15.1" rx="3.2" fill="none" stroke="#4a4c52" stroke-width="1.05"/><path d="M8.2 8.3 H10.8 M8.2 11.2 H12.6 M8.2 14 H12.6" stroke="#4a4c52" stroke-width="1"/></svg>
<svg style="position:absolute;left:1868px;top:244.2px;" width="18" height="18" viewBox="0 0 18 18" fill="none"><path d="M2.1 5.5 H15.6" stroke="#d35f3d" stroke-width="1" stroke-linecap="round"/><path d="M5.4 5.5 C5.4 3 6.7 1.3 8.9 1.3 C11.1 1.3 12.6 3 12.6 5.5" stroke="#d35f3d" stroke-width="1" fill="none"/><path d="M3.3 5.5 V12.8 C3.3 14.3 4.3 15.4 5.8 15.4 H12 C13.5 15.4 14.5 14.3 14.5 12.8 V5.5" stroke="#d35f3d" stroke-width="1" fill="none"/><path d="M7.4 7.8 V11.6 M10.6 7.8 V11.6" stroke="#d9603c" stroke-width="1.2" stroke-linecap="round"/></svg>
<div style="position:absolute;left:517px;top:92px;width:376px;height:77px;background:#fff;border-radius:0 0 4px 4px;box-shadow:0 3px 6px rgba(0,0,0,0.16);"></div>
<div style="position:absolute;left:525px;top:97px;width:16px;height:16px;background:#2f56e8;border-radius:3px;"></div>
<svg style="position:absolute;left:525px;top:97px;" width="16" height="16" viewBox="0 0 16 16" fill="none"><path d="M4.2 8.2 L6.8 10.6 L11.8 5.6" stroke="#fff" stroke-width="1.5" fill="none" stroke-linecap="round" stroke-linejoin="round"/></svg>
<div class="t" style="left:550.00px;top:99.62px;width:600px;font-size:12.5px;line-height:12.5px;font-weight:400;color:#2a2d35;text-align:left;">Đang sử dụng</div>
<div style="position:absolute;left:525px;top:121px;width:16px;height:16px;background:#2f56e8;border-radius:3px;"></div>
<svg style="position:absolute;left:525px;top:121px;" width="16" height="16" viewBox="0 0 16 16" fill="none"><path d="M4.2 8.2 L6.8 10.6 L11.8 5.6" stroke="#fff" stroke-width="1.5" fill="none" stroke-linecap="round" stroke-linejoin="round"/></svg>
<div class="t" style="left:550.00px;top:123.62px;width:600px;font-size:12.5px;line-height:12.5px;font-weight:400;color:#2a2d35;text-align:left;">Chưa ghi tăng</div>
<div style="position:absolute;left:525px;top:145px;width:16px;height:16px;background:#2f56e8;border-radius:3px;"></div>
<svg style="position:absolute;left:525px;top:145px;" width="16" height="16" viewBox="0 0 16 16" fill="none"><path d="M4.2 8.2 L6.8 10.6 L11.8 5.6" stroke="#fff" stroke-width="1.5" fill="none" stroke-linecap="round" stroke-linejoin="round"/></svg>
<div class="t" style="left:550.00px;top:147.62px;width:600px;font-size:12.5px;line-height:12.5px;font-weight:400;color:#2a2d35;text-align:left;">Đã ghi giảm</div>
<div style="position:absolute;left:1892px;top:270px;width:7px;height:198px;background:#f0f0f1"></div>
<div style="position:absolute;left:1892px;top:270px;width:7px;height:100px;background:#d2d2d4"></div>
<div style="position:absolute;left:283px;top:470px;width:1616px;height:36px;background:#f3f3f4"></div>
<div style="position:absolute;left:283px;top:470px;width:1616px;height:1px;background:#e6e6e6"></div>
<div style="position:absolute;left:301px;top:470px;width:1px;height:36px;background:#e4e4e4"></div>
<div style="position:absolute;left:481px;top:470px;width:1px;height:36px;background:#e4e4e4"></div>
<div style="position:absolute;left:701px;top:470px;width:1px;height:36px;background:#e4e4e4"></div>
<div style="position:absolute;left:901px;top:470px;width:1px;height:36px;background:#e4e4e4"></div>
<div style="position:absolute;left:1081px;top:470px;width:1px;height:36px;background:#e4e4e4"></div>
<div style="position:absolute;left:1241px;top:470px;width:1px;height:36px;background:#e4e4e4"></div>
<div style="position:absolute;left:1441px;top:470px;width:1px;height:36px;background:#e4e4e4"></div>
<div style="position:absolute;left:1641px;top:470px;width:1px;height:36px;background:#e4e4e4"></div>
<div style="position:absolute;left:1791px;top:470px;width:1px;height:36px;background:#e4e4e4"></div>
<div style="position:absolute;left:1794px;top:470px;width:1px;height:36px;background:#e4e4e4"></div>
<div class="t" style="left:471.00px;top:481.00px;width:600px;font-size:13px;line-height:13px;font-weight:700;color:#2a2a2e;text-align:right;">0</div>
<div class="t" style="left:630.50px;top:481.00px;width:600px;font-size:13px;line-height:13px;font-weight:700;color:#2a2a2e;text-align:right;letter-spacing:0.1px;">3.500.000</div>
<div class="t" style="left:831.00px;top:481.00px;width:600px;font-size:13px;line-height:13px;font-weight:700;color:#2a2a2e;text-align:right;">0</div>
<div style="position:absolute;left:283px;top:505px;width:1616px;height:7px;background:#f0f0f1"></div>
<div style="position:absolute;left:1040px;top:505px;width:857px;height:7px;background:#d2d2d4;border-radius:1px"></div>
<div style="position:absolute;left:283px;top:512px;width:1616px;height:35px;background:linear-gradient(180deg,#fbfcfd,#f7f8fa);"></div>
<div class="t" style="left:293.50px;top:525.00px;width:600px;font-size:13px;line-height:13px;font-weight:400;color:#2b2b2e;text-align:left;letter-spacing:-0.2px;">Tổng số: <b>3</b> bản ghi</div>
<div class="t" style="left:1631.00px;top:525.00px;width:600px;font-size:13px;line-height:13px;font-weight:400;color:#2b2b2e;text-align:left;">Số dòng/trang</div>
<div class="t" style="left:1725.00px;top:525.00px;width:600px;font-size:13px;line-height:13px;font-weight:400;color:#111;text-align:left;">20</div>
<svg style="position:absolute;left:1751.5px;top:527.25px;" width="12" height="8.5" viewBox="0 0 12 8.5" fill="none"><path d="M2 2 L6.0 6.5 L10 2" stroke="#111" stroke-width="2" stroke-linecap="round" stroke-linejoin="round"/></svg>
<svg style="position:absolute;left:1794.5px;top:528px;" width="8" height="8" viewBox="0 0 8 8" fill="none"><path d="M6 1 L1.3 4 L6 7" stroke="#7a7a7a" stroke-width="1.1" fill="none"/></svg>
<div class="t" style="left:1812.00px;top:525.00px;width:600px;font-size:13px;line-height:13px;font-weight:400;color:#2b2b2e;text-align:left;letter-spacing:-0.2px;">Trang</div>
<div class="t" style="left:1860.00px;top:525.00px;width:600px;font-size:13px;line-height:13px;font-weight:700;color:#111;text-align:left;">1</div>
<svg style="position:absolute;left:1881.5px;top:528px;" width="8" height="8" viewBox="0 0 8 8" fill="none"><path d="M1.3 1 L6 4 L1.3 7" stroke="#7a7a7a" stroke-width="1.1" fill="none"/></svg>
<div style="position:absolute;left:283px;top:547px;width:1616px;height:1px;background:#b8b9bd"></div>
<div style="position:absolute;left:283px;top:548px;width:1616px;height:2px;background:#f4f4f6"></div>
<div style="position:absolute;left:283px;top:550px;width:1616px;height:1px;background:#cfd0d3"></div>
<div style="position:absolute;left:283px;top:551px;width:1616px;height:220px;background:#ffffff"></div>
<div class="t" style="left:299.50px;top:558.70px;width:600px;font-size:13px;line-height:13px;font-weight:400;color:#212121;text-align:left;">Thông tin chung</div>
<div class="t" style="left:425.00px;top:558.60px;width:600px;font-size:13px;line-height:13px;font-weight:400;color:#3857cc;text-align:left;letter-spacing:-0.05px;-webkit-text-stroke:0.15px #3857cc;">Lịch sử biến động</div>
<div style="position:absolute;left:409px;top:550px;width:129px;height:28px;border:3px solid #d7202a;"></div>
<div style="position:absolute;left:1873px;top:557px;width:16px;height:16px;border-radius:8px;background:#e2e3e8"></div>
<svg style="position:absolute;left:1875.5px;top:561.25px;" width="11" height="7.5" viewBox="0 0 11 7.5" fill="none"><path d="M2 2 L5.5 5.5 L9 2" stroke="#3457d5" stroke-width="1.6" stroke-linecap="round" stroke-linejoin="round"/></svg>
<div style="position:absolute;left:283px;top:584px;width:1616px;height:35px;background:#f3f3f3"></div>
<div style="position:absolute;left:283px;top:619px;width:1616px;height:1px;background:#e4e4e4"></div>
<div style="position:absolute;left:283px;top:655px;width:1616px;height:1px;background:#e4e4e4"></div>
<div style="position:absolute;left:283px;top:690px;width:1616px;height:1px;background:#e4e4e4"></div>
<div style="position:absolute;left:283px;top:724px;width:1616px;height:1px;background:#e4e4e4"></div>
<div style="position:absolute;left:332px;top:584px;width:1px;height:141px;background:#e4e4e4"></div>
<div style="position:absolute;left:482px;top:584px;width:1px;height:141px;background:#e4e4e4"></div>
<div style="position:absolute;left:632px;top:584px;width:1px;height:141px;background:#e4e4e4"></div>
<div style="position:absolute;left:782px;top:584px;width:1px;height:141px;background:#e4e4e4"></div>
<div style="position:absolute;left:1289px;top:584px;width:1px;height:141px;background:#e4e4e4"></div>
<div style="position:absolute;left:1796px;top:584px;width:1px;height:141px;background:#e4e4e4"></div>
<div style="position:absolute;left:1799px;top:584px;width:1px;height:141px;background:#e4e4e4"></div>
<div class="t" style="left:277.50px;top:595.84px;width:60px;font-size:12px;line-height:12px;font-weight:700;color:#2a2a2e;text-align:center;">STT</div>
<div class="t" style="left:343.00px;top:595.84px;width:600px;font-size:12px;line-height:12px;font-weight:700;color:#2a2a2e;text-align:left;">Số chứng từ</div>
<div class="t" style="left:257.00px;top:595.84px;width:600px;font-size:12px;line-height:12px;font-weight:700;color:#2a2a2e;text-align:center;">Ngày chứng từ</div>
<div class="t" style="left:407.00px;top:595.84px;width:600px;font-size:12px;line-height:12px;font-weight:700;color:#2a2a2e;text-align:center;">Ngày biến động</div>
<div class="t" style="left:793.00px;top:595.84px;width:600px;font-size:12px;line-height:12px;font-weight:700;color:#2a2a2e;text-align:left;">Loại biến động</div>
<div class="t" style="left:1300.50px;top:595.84px;width:600px;font-size:12px;line-height:12px;font-weight:700;color:#2a2a2e;text-align:left;">Nội dung</div>
<div class="t" style="left:1549.50px;top:595.84px;width:600px;font-size:12px;line-height:12px;font-weight:700;color:#2a2a2e;text-align:center;">Chức năng</div>
<div class="t" style="left:277.50px;top:631.00px;width:60px;font-size:13px;line-height:13px;font-weight:400;color:#262626;text-align:center;">1</div>
<div class="t" style="left:343.00px;top:631.00px;width:600px;font-size:13px;line-height:13px;font-weight:400;color:#3a63c8;text-align:left;letter-spacing:-0.45px;">DCCCDC000001</div>
<div class="t" style="left:257.00px;top:631.00px;width:600px;font-size:13px;line-height:13px;font-weight:400;color:#262626;text-align:center;letter-spacing:0.45px;">25/11/2025</div>
<div class="t" style="left:407.00px;top:631.00px;width:600px;font-size:13px;line-height:13px;font-weight:400;color:#262626;text-align:center;letter-spacing:0.45px;">25/11/2025</div>
<div class="t" style="left:793.00px;top:631.00px;width:600px;font-size:13px;line-height:13px;font-weight:400;color:#262626;text-align:left;letter-spacing:-0.1px;">Điều chuyển đi</div>
<svg style="position:absolute;left:1838.5px;top:629px;transform:scale(0.95);transform-origin:0 0;" width="18" height="18" viewBox="0 0 18 18" fill="none"><path d="M2.1 5.5 H15.6" stroke="#d35f3d" stroke-width="1" stroke-linecap="round"/><path d="M5.4 5.5 C5.4 3 6.7 1.3 8.9 1.3 C11.1 1.3 12.6 3 12.6 5.5" stroke="#d35f3d" stroke-width="1" fill="none"/><path d="M3.3 5.5 V12.8 C3.3 14.3 4.3 15.4 5.8 15.4 H12 C13.5 15.4 14.5 14.3 14.5 12.8 V5.5" stroke="#d35f3d" stroke-width="1" fill="none"/><path d="M7.4 7.8 V11.6 M10.6 7.8 V11.6" stroke="#d9603c" stroke-width="1.2" stroke-linecap="round"/></svg>
<div class="t" style="left:277.50px;top:666.50px;width:60px;font-size:13px;line-height:13px;font-weight:400;color:#262626;text-align:center;">2</div>
<div class="t" style="left:343.00px;top:666.50px;width:600px;font-size:13px;line-height:13px;font-weight:400;color:#3a63c8;text-align:left;letter-spacing:-0.45px;">KKCCDC000001</div>
<div class="t" style="left:257.00px;top:666.50px;width:600px;font-size:13px;line-height:13px;font-weight:400;color:#262626;text-align:center;letter-spacing:0.45px;">14/10/2025</div>
<div class="t" style="left:407.00px;top:666.50px;width:600px;font-size:13px;line-height:13px;font-weight:400;color:#262626;text-align:center;letter-spacing:0.45px;">14/10/2025</div>
<div class="t" style="left:793.00px;top:666.50px;width:600px;font-size:13px;line-height:13px;font-weight:400;color:#262626;text-align:left;letter-spacing:-0.1px;">Kiểm kê</div>
<svg style="position:absolute;left:1838.5px;top:664.5px;transform:scale(0.95);transform-origin:0 0;" width="18" height="18" viewBox="0 0 18 18" fill="none"><path d="M2.1 5.5 H15.6" stroke="#d35f3d" stroke-width="1" stroke-linecap="round"/><path d="M5.4 5.5 C5.4 3 6.7 1.3 8.9 1.3 C11.1 1.3 12.6 3 12.6 5.5" stroke="#d35f3d" stroke-width="1" fill="none"/><path d="M3.3 5.5 V12.8 C3.3 14.3 4.3 15.4 5.8 15.4 H12 C13.5 15.4 14.5 14.3 14.5 12.8 V5.5" stroke="#d35f3d" stroke-width="1" fill="none"/><path d="M7.4 7.8 V11.6 M10.6 7.8 V11.6" stroke="#d9603c" stroke-width="1.2" stroke-linecap="round"/></svg>
<div class="t" style="left:277.50px;top:701.50px;width:60px;font-size:13px;line-height:13px;font-weight:400;color:#262626;text-align:center;">3</div>
<div class="t" style="left:343.00px;top:701.50px;width:600px;font-size:13px;line-height:13px;font-weight:400;color:#3a63c8;text-align:left;letter-spacing:-0.45px;">GTCCDC000001</div>
<div class="t" style="left:257.00px;top:701.50px;width:600px;font-size:13px;line-height:13px;font-weight:400;color:#262626;text-align:center;letter-spacing:0.45px;">14/10/2025</div>
<div class="t" style="left:407.00px;top:701.50px;width:600px;font-size:13px;line-height:13px;font-weight:400;color:#262626;text-align:center;letter-spacing:0.45px;">14/10/2025</div>
<div class="t" style="left:793.00px;top:701.50px;width:600px;font-size:13px;line-height:13px;font-weight:400;color:#262626;text-align:left;letter-spacing:-0.1px;">Ghi tăng</div>
<svg style="position:absolute;left:1838.5px;top:699.5px;transform:scale(0.95);transform-origin:0 0;" width="18" height="18" viewBox="0 0 18 18" fill="none"><path d="M2.1 5.5 H15.6" stroke="#d35f3d" stroke-width="1" stroke-linecap="round"/><path d="M5.4 5.5 C5.4 3 6.7 1.3 8.9 1.3 C11.1 1.3 12.6 3 12.6 5.5" stroke="#d35f3d" stroke-width="1" fill="none"/><path d="M3.3 5.5 V12.8 C3.3 14.3 4.3 15.4 5.8 15.4 H12 C13.5 15.4 14.5 14.3 14.5 12.8 V5.5" stroke="#d35f3d" stroke-width="1" fill="none"/><path d="M7.4 7.8 V11.6 M10.6 7.8 V11.6" stroke="#d9603c" stroke-width="1.2" stroke-linecap="round"/></svg>
</body></html>
